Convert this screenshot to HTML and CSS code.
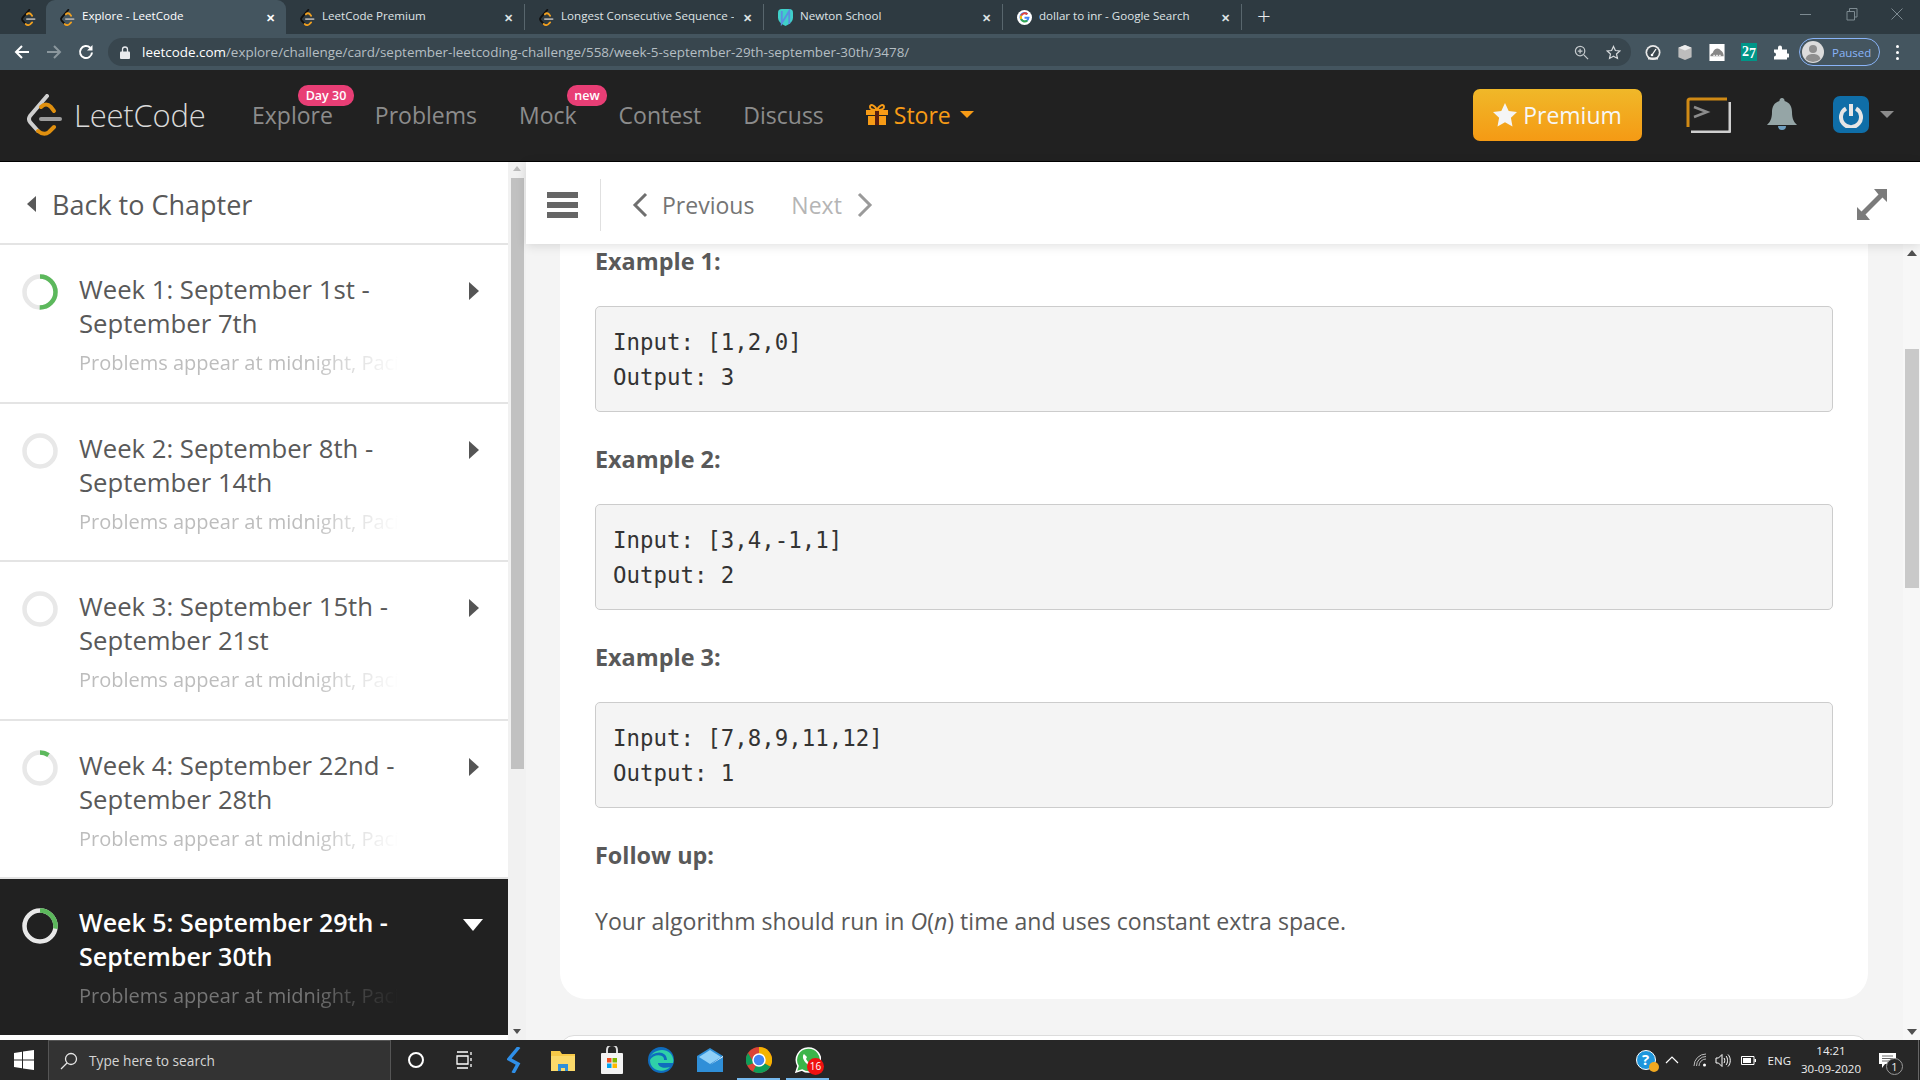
FILE: index.html
```html
<!DOCTYPE html>
<html lang="en">
<head>
<meta charset="utf-8">
<title>Explore - LeetCode</title>
<link rel="stylesheet" href="styles.css">
</head>
<body>
<svg class="defs" width="0" height="0" aria-hidden="true">
  <symbol id="lc" viewBox="0 0 36 42">
    <path d="M20 2 3 22q-2 3 0 6l8 9" fill="none" stroke="#cfcfcf" stroke-width="4" stroke-linecap="round"/>
    <path d="M11 37q6 5 11 1l5-5" fill="none" stroke="#e0900f" stroke-width="4" stroke-linecap="round"/>
    <path d="M14 13q5-5 10 0l3 4" fill="none" stroke="#e0900f" stroke-width="4" stroke-linecap="round"/>
    <path d="M14 25h19" fill="none" stroke="#9c9c9c" stroke-width="4" stroke-linecap="round"/>
  </symbol>
  <symbol id="fav" viewBox="0 0 36 42">
    <path d="M20 2 3 22q-2 3 0 6l8 9" fill="none" stroke="#111" stroke-width="4.500" stroke-linecap="round"/>
    <path d="M11 37q6 5 11 1l5-5" fill="none" stroke="#f0a020" stroke-width="4.500" stroke-linecap="round"/>
    <path d="M14 13q5-5 10 0l3 4" fill="none" stroke="#f0a020" stroke-width="4.500" stroke-linecap="round"/>
    <path d="M14 25h19" fill="none" stroke="#aaa" stroke-width="4.500" stroke-linecap="round"/>
  </symbol>
  <symbol id="right" viewBox="0 0 10 18"><path d="M0 0 10 9 0 18z" fill="#555"/></symbol>
</svg>

<header class="tabstrip">
  <div class="pinned"><svg class="fav"><use href="#fav"/></svg></div>
  <div class="tab active"><svg class="fav"><use href="#fav"/></svg><span class="tab-title">Explore - LeetCode</span><span class="tab-x">✕</span></div>
  <div class="tab sep"><svg class="fav"><use href="#fav"/></svg><span class="tab-title">LeetCode Premium</span><span class="tab-x">✕</span></div>
  <div class="tab sep"><svg class="fav"><use href="#fav"/></svg><span class="tab-title">Longest Consecutive Sequence -</span><span class="tab-x">✕</span></div>
  <div class="tab sep">
    <svg class="fav" viewBox="0 0 16 18"><path d="M0 4Q0 0 4 0h8q4 0 4 4v5q0 6-8 9-8-3-8-9z" fill="#3fd0c9"/><path d="M4 2v13l8-13v14" fill="none" stroke="#5a8fe0" stroke-width="2"/></svg>
    <span class="tab-title">Newton School</span><span class="tab-x">✕</span></div>
  <div class="tab sep">
    <svg class="fav" viewBox="0 0 18 18"><circle cx="9" cy="9" r="9" fill="#fff"/><path d="M15 8H9v2.500h3.400A3.600 3.600 0 1 1 11.500 6l1.800-1.800A6 6 0 1 0 15 9z" fill="#4285f4"/><path d="M4.200 6a5.800 5.800 0 0 1 9-1.800L11.500 6a3.400 3.400 0 0 0-5.200.8z" fill="#ea4335"/><path d="M3.800 11.500a6 6 0 0 1 .2-5.300l2.200 1a3.500 3.500 0 0 0 0 3z" fill="#fbbc05"/><path d="M3.800 11.500l2.300-1a3.500 3.500 0 0 0 5.300 1.300l1.800 1.700a6 6 0 0 1-9.400-2z" fill="#34a853"/></svg>
    <span class="tab-title">dollar to inr - Google Search</span><span class="tab-x">✕</span></div>
  <div class="newtab">+</div>
  <div class="winctl">
    <svg width="14" height="14" viewBox="0 0 14 14"><path d="M2 7.500h11" stroke="#7d8a91" fill="none"/></svg>
    <svg width="14" height="14" viewBox="0 0 14 14"><path d="M3 4.500h7.500V13H3zM5.500 4V1.500H13V10h-2.500" stroke="#7d8a91" fill="none"/></svg>
    <svg width="14" height="14" viewBox="0 0 14 14"><path d="M1.500 1.500l11 11M12.500 1.500l-11 11" stroke="#7d8a91" fill="none"/></svg>
  </div>
</header>

<div class="toolbar">
  <svg class="tb-btn" viewBox="0 0 18 18"><path d="M16 9H3M9 3 3 9l6 6" stroke="#fff" stroke-width="2" fill="none"/></svg>
  <svg class="tb-btn" viewBox="0 0 18 18"><path d="M2 9h13M9 3l6 6-6 6" stroke="#8b979d" stroke-width="2" fill="none"/></svg>
  <svg class="tb-btn" viewBox="0 0 18 18"><path d="M15 9.500A6 6 0 1 1 13.200 4.700" stroke="#fff" stroke-width="2" fill="none"/><path d="M15.500 2v5.500H10z" fill="#fff"/></svg>
  <div class="omnibox">
    <svg class="lock" viewBox="0 0 10 13"><path d="M2.500 6V3.500a2.500 2.500 0 0 1 5 0V6" stroke="#e8eaed" stroke-width="1.300" fill="none"/><rect y="5.500" width="10" height="7.500" rx="1" fill="#e8eaed"/></svg>
    <span class="url"><b>leetcode.com</b>/explore/challenge/card/september-leetcoding-challenge/558/week-5-september-29th-september-30th/3478/</span>
    <svg class="omni-ic zoomic" viewBox="0 0 16 16"><circle cx="6.500" cy="6.500" r="5" stroke="#c5cacd" stroke-width="1.300" fill="none"/><path d="M10.500 10.500l4.500 4.500M6.500 4v5M4 6.500h5" stroke="#c5cacd" stroke-width="1.300" fill="none"/></svg>
    <svg class="omni-ic" viewBox="0 0 16 16"><path d="M8 1.500l2 4.400 4.700.5-3.500 3.200 1 4.700L8 11.900l-4.200 2.400 1-4.700L1.300 6.400 6 5.900z" stroke="#d5d9db" stroke-width="1.300" fill="none"/></svg>
  </div>
  <div class="exts">
    <svg class="ext" viewBox="0 0 16 16"><circle cx="8" cy="8" r="7.500" fill="#e9e9e9"/><circle cx="8" cy="8" r="5.800" fill="#3b474e"/><path d="M3 13h10v2H3z" fill="#e9e9e9"/><path d="M7 10.500 11 4.500" stroke="#fff" stroke-width="1.300"/><circle cx="7" cy="10.500" r="1.300" fill="#fff"/></svg>
    <svg class="ext" viewBox="0 0 16 18"><path d="M8 1l7 3v10l-7 3-7-3V4z" fill="#bdbdbd"/><path d="M8 7l7-3-7-3-7 3z" fill="#ececec"/></svg>
    <svg class="ext" viewBox="0 0 16 18"><rect width="16" height="18" fill="#fff"/><path d="M1 13c0-3 3-3 3-5 2-4 6-4 8-1 2 1 3 3 3 6z" fill="#888"/><path d="M4 12h8" stroke="#fff" stroke-dasharray="2 1"/></svg>
    <div class="ext27">2<span>7</span></div>
    <svg class="ext" viewBox="0 0 16 16"><path d="M1 5h4V3a2 2 0 0 1 4 0v2h5v4h1a2 2 0 0 1 0 4h-1v2H1v-3a2 2 0 0 0 0-4z" fill="#fff"/></svg>
  </div>
  <div class="paused">
    <svg class="pause-av" viewBox="0 0 22 22"><circle cx="11" cy="11" r="11" fill="#dcdcdc"/><circle cx="11" cy="8" r="4" fill="#8f8f8f"/><path d="M3.500 18c1-4 4-5 7.500-5s6.500 1 7.500 5a11 11 0 0 1-15 0z" fill="#8f8f8f"/></svg>
    <span>Paused</span>
  </div>
  <div class="dots"><i></i><i></i><i></i></div>
</div>

<nav class="navbar">
  <a class="brand"><svg class="logo"><use href="#lc"/></svg><span class="brand-text">LeetCode</span></a>
  <ul class="navlinks">
    <li class="navlink">Explore<span class="badge day">Day 30</span></li>
    <li class="navlink">Problems</li>
    <li class="navlink">Mock<span class="badge new">new</span></li>
    <li class="navlink">Contest</li>
    <li class="navlink">Discuss</li>
    <li class="navlink store">
      <svg class="gift" viewBox="0 0 22 21"><path d="M0 6h22v5H0zM2 12h18v9H2z" fill="#f79b16"/><path d="M9 6h4v15H9z" fill="#5a1d10"/><path d="M11 6C8 0 4 0 4 3c0 2 3 3 7 3zm0 0c3-6 7-6 7-3 0 2-3 3-7 3z" fill="none" stroke="#f79b16" stroke-width="2"/></svg>
      <span>Store</span><i class="store-caret"></i>
    </li>
  </ul>
  <div class="nav-right">
    <button class="premium"><svg class="pstar" viewBox="0 0 24 24"><path d="M12 0l3.700 7.900 8.300 1-6.100 5.900 1.600 8.700L12 19.200 4.500 23.500l1.600-8.700L0 8.900l8.300-1z" fill="#f5f5f5"/></svg>Premium</button>
    <svg class="term" viewBox="0 0 45 36"><path d="M44 5v28a2 2 0 0 1-2 2H5" fill="none" stroke="#cfcfcf" stroke-width="3"/><path d="M2 30V4a2 2 0 0 1 2-2h37" fill="none" stroke="#d08a15" stroke-width="3"/><path d="M8 10l13 5-13 5" fill="none" stroke="#8c8c8c" stroke-width="2.500"/></svg>
    <svg class="bell" viewBox="0 0 30 33"><path d="M15 0a2.500 2.500 0 0 1 2.500 3C23 4.500 25 9 25 14c0 7 2 10 5 13H0c3-3 5-6 5-13C5 9 7 4.500 12.500 3A2.500 2.500 0 0 1 15 0z" fill="#95a5a6"/><path d="M11 28a4 4 0 0 0 8 0z" fill="#6f9fc0"/></svg>
    <div class="avatar"><svg width="24" height="26" viewBox="0 0 24 26"><path d="M7 6.500a10 10 0 1 0 10 0" fill="none" stroke="#e6e6e6" stroke-width="4"/><path d="M12 2v12" stroke="#e6e6e6" stroke-width="4"/></svg></div>
    <i class="av-caret"></i>
  </div>
</nav>

<div class="workspace">
  <aside class="sidebar">
    <div class="side-list">
      <div class="back"><i class="back-caret"></i>Back to Chapter</div>

      <div class="week">
        <svg class="ring" viewBox="0 0 36 36"><circle class="ring-bg" cx="18" cy="18" r="15.500"/><circle class="ring-fg" cx="18" cy="18" r="15.500" stroke-dasharray="48.700 97.400"/></svg>
        <div class="week-body"><div class="week-title">Week 1: September 1st - September 7th</div><div class="week-sub">Problems appear at midnight, Pacific</div></div>
        <svg class="week-arrow"><use href="#right"/></svg>
      </div>
      <div class="week">
        <svg class="ring" viewBox="0 0 36 36"><circle class="ring-bg" cx="18" cy="18" r="15.500"/></svg>
        <div class="week-body"><div class="week-title">Week 2: September 8th - September 14th</div><div class="week-sub">Problems appear at midnight, Pacific</div></div>
        <svg class="week-arrow"><use href="#right"/></svg>
      </div>
      <div class="week">
        <svg class="ring" viewBox="0 0 36 36"><circle class="ring-bg" cx="18" cy="18" r="15.500"/></svg>
        <div class="week-body"><div class="week-title">Week 3: September 15th - September 21st</div><div class="week-sub">Problems appear at midnight, Pacific</div></div>
        <svg class="week-arrow"><use href="#right"/></svg>
      </div>
      <div class="week">
        <svg class="ring" viewBox="0 0 36 36"><circle class="ring-bg" cx="18" cy="18" r="15.500"/><circle class="ring-fg" cx="18" cy="18" r="15.500" stroke-dasharray="9 97.400"/></svg>
        <div class="week-body"><div class="week-title">Week 4: September 22nd - September 28th</div><div class="week-sub">Problems appear at midnight, Pacific</div></div>
        <svg class="week-arrow"><use href="#right"/></svg>
      </div>
      <div class="week current">
        <svg class="ring" viewBox="0 0 36 36"><circle class="ring-bg" cx="18" cy="18" r="15.500"/><circle class="ring-fg" cx="18" cy="18" r="15.500" stroke-dasharray="27 97.400"/></svg>
        <div class="week-body"><div class="week-title">Week 5: September 29th - September 30th</div><div class="week-sub">Problems appear at midnight, Pacific</div></div>
        <i class="down-caret"></i>
      </div>
    </div>
    <div class="scroll side-scroll">
      <i class="arrow up small"></i>
      <div class="thumb side-thumb"></div>
      <i class="arrow down small"></i>
    </div>
  </aside>

  <main class="main">
    <div class="mainbar">
      <svg class="burger" viewBox="0 0 31 26"><path d="M0 0h31v6H0zM0 10h31v6H0zM0 20h31v6H0z" fill="#666"/></svg>
      <div class="divider"></div>
      <a class="pager prev"><svg class="chev" viewBox="0 0 16 26"><path d="M14 2 3 13l11 11" fill="none" stroke="#6f6f6f" stroke-width="3"/></svg>Previous</a>
      <a class="pager next">Next<svg class="chev" viewBox="0 0 16 26"><path d="M2 2l11 11L2 24" fill="none" stroke="#9a9a9a" stroke-width="3"/></svg></a>
      <svg class="expand" viewBox="0 0 30 31"><path d="M17 0h13v13l-4.500-4.500L8.500 25.500 13 31H0V18l4.500 4.500L21.500 5.500z" fill="#7b7b7b"/></svg>
    </div>
    <div class="pane-wrap">
      <div class="pane">
        <article class="card">
          <p class="label first">Example 1:</p>
          <pre class="code">Input: [1,2,0]
Output: 3</pre>
          <p class="label">Example 2:</p>
          <pre class="code">Input: [3,4,-1,1]
Output: 2</pre>
          <p class="label">Example 3:</p>
          <pre class="code">Input: [7,8,9,11,12]
Output: 1</pre>
          <p class="label">Follow up:</p>
          <p class="para">Your algorithm should run in <em>O</em>(<em>n</em>) time and uses constant extra space.</p>
        </article>
        <div class="card-next"></div>
      </div>
      <div class="scroll main-scroll">
        <i class="arrow up"></i>
        <div class="thumb main-thumb"></div>
        <i class="arrow down"></i>
      </div>
    </div>
  </main>
</div>

<footer class="taskbar">
  <div class="start"><svg width="20" height="20" viewBox="0 0 20 20"><path d="M0 3l8-1.200V9.500H0zM9 1.600 20 0v9.500H9zM0 10.500h8v7.700L0 17zM9 10.500h11V20L9 18.400z" fill="#fff"/></svg></div>
  <div class="search">
    <svg width="18" height="18" viewBox="0 0 18 18"><circle cx="11" cy="7" r="5.500" fill="none" stroke="#e6e6e6" stroke-width="1.300"/><path d="M7 11l-6 6" stroke="#e6e6e6" stroke-width="1.300"/></svg>
    <span>Type here to search</span>
  </div>
  <div class="task"><svg width="18" height="18" viewBox="0 0 18 18"><circle cx="9" cy="9" r="7" fill="none" stroke="#fff" stroke-width="2"/></svg></div>
  <div class="task"><svg width="18" height="18" viewBox="0 0 18 18"><path d="M1 1h11M1 17h11M1 5h11v8H1zM15 1v3M15 7v3M15 13v3" fill="none" stroke="#fff" stroke-width="1.300"/></svg></div>
  <div class="task"><svg class="bolt" width="18" height="26" viewBox="0 0 18 26"><path d="M12 0 2 12l9 5-5 9" fill="none" stroke="#2f8fe8" stroke-width="3.500"/></svg></div>
  <div class="task"><svg width="24" height="22" viewBox="0 0 24 22"><path d="M0 2h9l2 3h13v17H0z" fill="#f7c948"/><path d="M0 7h24v15H0z" fill="#fbd96a"/><path d="M7 22v-7h10v7h-3v-3h-4v3z" fill="#2f8fd8"/></svg></div>
  <div class="task"><svg width="22" height="28" viewBox="0 0 22 28"><path d="M6 8V4a5 5 0 0 1 10 0v4" fill="none" stroke="#ddd" stroke-width="2"/><rect y="7" width="22" height="21" rx="1" fill="#f3f3f3"/><path d="M6 12h4.500v4.500H6z" fill="#f25022"/><path d="M11.500 12H16v4.500h-4.500z" fill="#7fba00"/><path d="M6 17.500h4.500V22H6z" fill="#00a4ef"/><path d="M11.500 17.500H16V22h-4.500z" fill="#ffb900"/></svg></div>
  <div class="task"><svg width="26" height="26" viewBox="0 0 26 26"><circle cx="13" cy="13" r="13" fill="#0f6cbd"/><path d="M1 13C3 3 16 0 22 6c3 3 4 7 3 10H10c0 4 6 6 12 4-6 7-20 4-20-7 2-4 8-6 12-4 2 1 2 3 2 4h3c0-6-6-9-11-7-4 1-6 3-7 7z" fill="#2fd0a8"/></svg></div>
  <div class="task"><svg width="26" height="24" viewBox="0 0 26 24"><path d="M0 8 13 0l13 8v16H0z" fill="#2f8fd8"/><path d="M0 8l13 9 13-9v1l-13 8z" fill="#fff"/><path d="M2 9 13 2l11 7-11 7z" fill="#8fd0f8"/></svg></div>
  <div class="task on"><svg width="26" height="26" viewBox="0 0 26 26"><circle cx="13" cy="13" r="13" fill="#db4437"/><path d="M13 13 24.300 19.500A13 13 0 0 1 7 24.500z" fill="#0f9d58"/><path d="M13 0a13 13 0 0 1 11.300 19.500L13 13z" fill="#f4b400"/><path d="M2 6 8 16 1.200 18.500A13 13 0 0 1 2 6z" fill="#0f9d58"/><circle cx="13" cy="13" r="6" fill="#4285f4" stroke="#fff" stroke-width="1.500"/></svg></div>
  <div class="task on wa"><svg width="26" height="26" viewBox="0 0 26 26"><path d="M13 1a12 12 0 0 0-10 18L1 25l6-2A12 12 0 1 0 13 1z" fill="#3bb54a" stroke="#fff" stroke-width="1.500"/><path d="M9 7c-2 2-1 6 2 9s6 4 8 2l-2-3-2 1c-2-1-3-2-4-4l1-2z" fill="#fff"/></svg><span class="wa-badge">16</span></div>

  <div class="tray">
    <div class="help">?<i></i></div>
    <svg width="14" height="8" viewBox="0 0 14 8"><path d="M1 7l6-6 6 6" fill="none" stroke="#fff" stroke-width="1.200"/></svg>
    <svg class="wifi" width="14" height="14" viewBox="0 0 14 14"><path d="M1 13A12 12 0 0 1 13 1M3.500 13A9.500 9.500 0 0 1 13 3.500M6 13a7 7 0 0 1 7-7" fill="none" stroke="#bbb"/><circle cx="11.500" cy="12" r="1.500" fill="#fff"/></svg>
    <svg width="16" height="15" viewBox="0 0 16 15"><path d="M1 5h2.500L7 1.500v12L3.500 10H1zM9 5c1 1 1 4 0 5M11 3c2 2 2 7 0 9M13 1.500c3 3 3 9 0 12" fill="none" stroke="#fff"/></svg>
    <svg width="15" height="9" viewBox="0 0 15 9"><path d="M.5.500h12.500v8H.5z" fill="none" stroke="#fff"/><path d="M2 2h8v5H2zM13.500 3H15v3h-1.500z" fill="#fff"/></svg>
    <span class="lang">ENG</span>
    <div class="clock"><span>14:21</span><span>30-09-2020</span></div>
    <div class="notif">
      <svg width="17" height="15" viewBox="0 0 17 15"><path d="M0 0h17v11H6l-3 4v-4H0z" fill="#fff"/><path d="M3 3h11M3 5.500h11M3 8h8" stroke="#444" stroke-width=".8"/></svg>
      <span class="notif-count">1</span>
    </div>
  </div>
</footer>
</body>
</html>
```
FILE: styles.css
```css
* { box-sizing: border-box; }
html, body { margin: 0; height: 100%; }
body {
  width: 1920px; height: 1080px; overflow: hidden;
  display: flex; flex-direction: column;
  font-family: "Open Sans", "Liberation Sans", sans-serif;
  color: #595959; background: #fff;
}
.defs { position: absolute; }
svg { display: block; flex: none; }
ul { list-style: none; margin: 0; padding: 0; }

/* browser chrome */
.tabstrip {
  height: 34px; flex: none; display: flex; background: #2e3a41;
  font-size: 11.6px; color: #dfe3e5;
}
.pinned { width: 46px; display: flex; align-items: center; padding-left: 21px; }
.fav { width: 15px; height: 17px; }
.tab {
  width: 239px; height: 34px; flex: none; display: flex; align-items: center;
  padding: 0 10px 0 14px; gap: 7px; position: relative; border-radius: 9px 9px 0 0;
}
.tab.active { width: 240px; background: #44555f; color: #fff; }
.tab.sep { border-right: 1px solid #58666d; border-radius: 0; height: 26px; margin-top: 4px; }
.tab-title { flex: 1; white-space: nowrap; overflow: hidden; line-height: 16px; padding-bottom: 2px; }
.tab-x { font-size: 11px; font-weight: 700; width: 12px; text-align: center; }
.newtab { margin-left: 15px; font-size: 24px; font-weight: 300; color: #e8eaed; line-height: 32px; }
.winctl { margin-left: auto; display: flex; gap: 32px; padding: 7px 16px 0 0; }

.toolbar {
  height: 36px; flex: none; display: flex; align-items: center; background: #44555f;
  padding-left: 13px;
}
.tb-btn { width: 18px; height: 18px; margin-right: 14px; }
.omnibox {
  width: 1523px; height: 28px; margin-left: -1px; background: #38464e; border-radius: 14px;
  display: flex; align-items: center; padding: 0 10px 0 12px;
}
.lock { width: 10px; height: 13px; margin-right: 12px; }
.url { flex: 1; font-size: 13.43px; color: #b5bec3; white-space: nowrap; }
.url b { font-weight: 400; color: #fff; }
.omni-ic { width: 15px; height: 15px; }
.zoomic { margin-right: 17px; }
.exts { display: flex; align-items: center; gap: 16px; margin-left: 14px; }
.ext { width: 16px; height: 17px; }
.ext27 {
  width: 16px; height: 18px; background: #009688; color: #fff;
  font: 700 14px/18px "Liberation Serif", serif; text-align: center;
}
.ext27 span { position: relative; top: 2px; }
.paused {
  width: 81px; height: 28px; margin-left: 10px; border: 1px solid #8ab4f8; border-radius: 14px;
  display: flex; align-items: center; gap: 8px; padding-left: 2px; color: #8ab4f8; font-size: 11.5px;
}
.pause-av { width: 22px; height: 22px; }
.dots { margin-left: 16px; display: flex; flex-direction: column; gap: 3px; }
.dots i { width: 3px; height: 3px; border-radius: 50%; background: #fff; }

/* LeetCode navbar */
.navbar {
  height: 92px; flex: none; display: flex; align-items: center; background: #212121;
  border-bottom: 1px solid #000; padding: 0 0 2px 27px;
}
.brand { display: flex; align-items: center; gap: 11px; width: 204px; }
.logo { width: 36px; height: 42px; }
.brand-text { font-size: 31px; font-weight: 300; line-height: 40px; color: #d9d9d9; letter-spacing: -.2px; }
.navlinks { display: flex; }
.navlink {
  position: relative; padding: 0 21px; font-size: 23px; color: #8c8c8c; line-height: 34px;
  display: flex; align-items: center;
}
.badge {
  position: absolute; top: -13px; height: 21px; border-radius: 10px; background: #e83e75;
  color: #fff; font-size: 12.5px; font-weight: 600; line-height: 21px; text-align: center;
}
.badge.day { left: 67px; width: 56px; }
.badge.new { left: 69px; width: 40px; }
.store { color: #f79b16; }
.gift { width: 22px; height: 21px; margin-right: 6px; }
.store-caret { margin-left: 9px; border: 7px solid transparent; border-top-color: #f79b16; border-bottom: 0; }
.nav-right { margin-left: auto; display: flex; align-items: center; padding-right: 26px; }
.premium {
  width: 169px; height: 52px; border: 0; border-radius: 7px;
  background: linear-gradient(#f0b829, #f59a14); color: #f7f7f7;
  font: 400 23px "Open Sans", sans-serif;
  display: flex; align-items: center; justify-content: center; gap: 6px;
}
.pstar { width: 24px; height: 24px; }
.term { width: 45px; height: 36px; margin-left: 44px; }
.bell { width: 30px; height: 33px; margin-left: 36px; }
.avatar {
  width: 36px; height: 37px; margin-left: 36px; border-radius: 7px; background: #0f6ea8;
  display: flex; align-items: center; justify-content: center;
}
.av-caret { margin-left: 11px; border: 7px solid transparent; border-top-color: #8c8c8c; border-bottom: 0; }

/* workspace */
.workspace { flex: 1; min-height: 0; display: flex; }
.sidebar { width: 526px; flex: none; display: flex; }
.side-list { width: 508px; flex: none; overflow: hidden; }
.back {
  height: 83px; display: flex; align-items: center; padding: 3px 0 0 27px; gap: 16px;
  font-size: 27px; color: #595959; border-bottom: 2px solid #e4e4e4;
}
.back-caret { border: 8px solid transparent; border-right: 9px solid #595959; border-left: 0; }
.week {
  height: 158.5px; display: flex; align-items: flex-start; padding: 29px 0 0 22px;
  border-bottom: 2px solid #e4e4e4; position: relative;
}
.ring { width: 36px; height: 36px; transform: rotate(-90deg); }
.ring-bg, .ring-fg { fill: none; stroke-width: 4.5; }
.ring-bg { stroke: #e8e8e8; }
.ring-fg { stroke: #5cb85c; }
.week-body { width: 330px; margin: -1px 0 0 21px; }
.week-title { font-size: 25.7px; line-height: 34px; color: #595959; }
.week-sub {
  margin-top: 6px; width: 320px; height: 32px; overflow: hidden; white-space: nowrap;
  font-size: 20px; line-height: 32px; color: #bdbdbd;
  -webkit-mask-image: linear-gradient(90deg, #000 72%, transparent 100%);
  mask-image: linear-gradient(90deg, #000 72%, transparent 100%);
}
.week-arrow { position: absolute; left: 469px; top: 37px; width: 10px; height: 18px; }
.week.current { background: #212121; border-bottom: 0; height: 156px; }
.current .week-body { margin-top: -3px; }
.current .week-title { color: #fff; font-weight: 600; font-size: 25px; }
.current .week-sub { color: #757575; margin-top: 7px; }
.down-caret {
  position: absolute; left: 463px; top: 40px;
  border: 10px solid transparent; border-top: 12px solid #fff; border-bottom: 0;
}
.scroll { flex: none; width: 17px; background: #f1f1f1; display: flex; flex-direction: column; align-items: center; }
.side-scroll { width: 18px; }
.thumb { background: #c1c1c1; }
.side-thumb { width: 13px; height: 591px; }
.arrow { display: block; flex: none; border: 5px solid transparent; }
.arrow.up { border-top: 0; border-bottom: 6px solid #505050; margin: 6px 0 8px; }
.arrow.down { border-bottom: 0; border-top: 6px solid #505050; margin: auto 0 5px; }
.arrow.small { border-width: 4px; }
.arrow.small.up { border-top: 0; border-bottom: 5px solid #bbb; margin: 4px 0 7px; }
.arrow.small.down { border-bottom: 0; border-top: 5px solid #505050; margin: auto 0 6px; }

.main { flex: 1; min-width: 0; display: flex; flex-direction: column; }
.mainbar {
  height: 82px; flex: none; display: flex; align-items: center; background: #fff;
  padding: 3px 0 0 21px; box-shadow: 0 2px 10px rgba(0,0,0,.12); position: relative; z-index: 1;
}
.burger { width: 31px; height: 26px; }
.divider { width: 1px; height: 52px; background: #e0e0e0; margin: 0 31px 0 22px; }
.pager { display: flex; align-items: center; gap: 14px; font-size: 23px; color: #757575; }
.pager.next { color: #b5b5b5; margin-left: 37px; gap: 15px; }
.chev { width: 16px; height: 26px; }
.expand { width: 30px; height: 31px; margin-left: auto; margin-right: 33px; }

.pane-wrap { flex: 1; min-height: 0; display: flex; }
.pane { flex: 1; min-width: 0; overflow: hidden; background: #f4f4f4; padding: 0 35px 0 34px; }
.card { height: 756px; background: #fff; border-radius: 0 0 26px 26px; padding: 0 35px; }
.label { margin: 29px 0 27px; font-size: 23.4px; line-height: 36px; font-weight: 700; color: #595959; }
.label.first { margin-top: -1px; }
.code {
  margin: 0; height: 106px; padding: 18px 17px; background: #f4f4f4;
  border: 1px solid #ccc; border-radius: 5px;
  font-family: "DejaVu Sans Mono", "Liberation Mono", monospace; font-size: 22.4px; line-height: 35px; color: #333;
}
.para { margin: 30px 0 0; font-size: 23.1px; line-height: 36px; color: #595959; }
.card-next {
  height: 60px; margin-top: 36px; background: #fff; border: 1px solid #dcdcdc; border-radius: 14px 14px 0 0;
}
.main-scroll { background: #f7f7f7; }
.main-thumb { width: 14px; height: 239px; margin-top: 85px; background: #c9c9c9; }

/* Windows taskbar */
.taskbar {
  height: 40px; flex: none; display: flex; align-items: center; background: #272727; color: #eee;
}
.start { width: 48px; height: 40px; display: flex; align-items: center; justify-content: center; }
.search {
  width: 343px; height: 40px; background: #333; border: 1px solid #555; border-width: 1px 1px 0 1px;
  display: flex; align-items: center; gap: 11px; padding-left: 11px; font-size: 13.7px; color: #d5d5d5;
}
.task { width: 49px; height: 40px; display: flex; align-items: center; justify-content: center; position: relative; }
.bolt { margin-left: 4px; }
.task.on::after { content: ""; position: absolute; left: 3px; right: 3px; bottom: 0; height: 2px; background: #76b9ed; }
.wa-badge {
  position: absolute; left: 24px; top: 18px; width: 17px; height: 17px; border-radius: 50%;
  background: #f01010; color: #fff; font-size: 10px; line-height: 17px; text-align: center;
}
.tray { margin-left: auto; display: flex; align-items: center; gap: 10px; height: 40px; }
.help {
  width: 20px; height: 20px; border-radius: 50%; background: #1e96dc; border: 1.5px solid #fff;
  color: #fff; font-size: 15px; font-weight: 700; line-height: 17px; text-align: center; position: relative; margin-right: -1px;
}
.help i { position: absolute; right: -4px; bottom: -3px; width: 10px; height: 10px; border-radius: 50%; background: #f0a820; }
.wifi { margin: 0 -2px 0 4px; }
.lang { font-size: 11.5px; margin: 0 -2px 0 2px; }
.clock { width: 64px; display: flex; flex-direction: column; align-items: center; font-size: 11.5px; line-height: 18px; white-space: nowrap; }
.notif { width: 46px; height: 40px; position: relative; display: flex; align-items: center; padding-left: 6px; border-right: 1px solid #666; margin-right: 1px; }
.notif-count {
  position: absolute; left: 13px; top: 18px; width: 17px; height: 17px; border-radius: 50%;
  border: 1px solid #999; background: #272727; font-size: 11px; line-height: 15px; text-align: center;
}
```
